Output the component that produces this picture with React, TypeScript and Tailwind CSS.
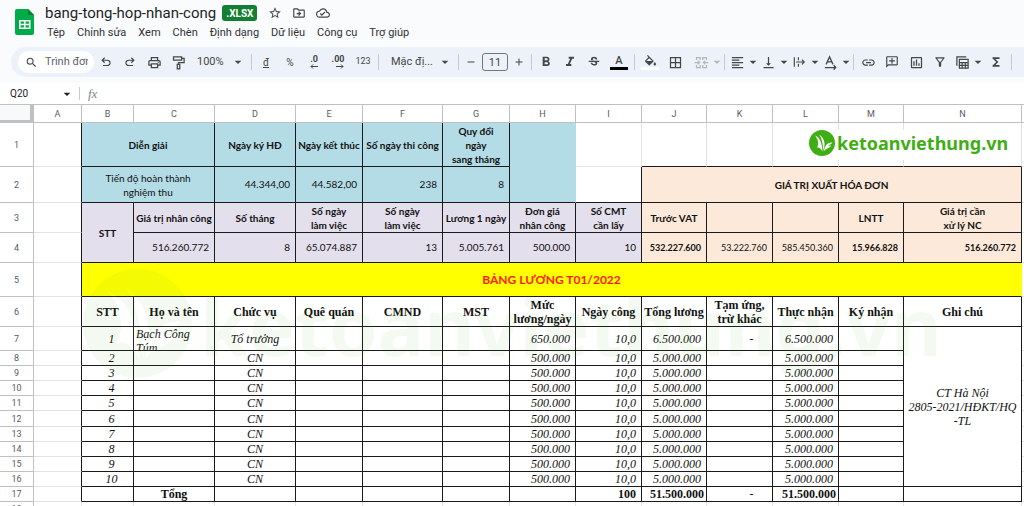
import React from 'react';
import {
  MdArrowDropDown,
  MdAdd,
  MdBorderAll,
  MdFormatAlignLeft,
  MdFormatBold,
  MdFormatItalic,
  MdFunctions,
  MdLink,
  MdOutlineAddComment,
  MdOutlineCloudDone,
  MdOutlineDriveFileMove,
  MdOutlineFilterAlt,
  MdOutlineInsertChart,
  MdOutlinePrint,
  MdRemove,
  MdSearch,
  MdStarBorder,
  MdStrikethroughS,
  MdVerticalAlignBottom,
} from 'react-icons/md';

const menus = ['Tệp', 'Chỉnh sửa', 'Xem', 'Chèn', 'Định dạng', 'Dữ liệu', 'Công cụ', 'Trợ giúp'];

const UndoIcon = () => (
  <svg viewBox="0 -960 960 960" className="size-[14px]" fill="currentColor">
    <path d="M280-200v-80h284q63 0 109.5-40T720-420q0-60-46.5-100T564-560H312l104 104-56 56-200-200 200-200 56 56-104 104h252q97 0 169.5 63T800-420q0 94-72.5 157T564-200H280Z" />
  </svg>
);

const PaintIcon = () => (
  <svg viewBox="0 0 24 24" className="size-[15px]" fill="none" stroke="currentColor" strokeWidth="2">
    <path d="M4 3h13v5H4zM17 5.500h4V12h-9v3" />
    <path d="M10 15h4v7h-4z" />
  </svg>
);

const BucketIcon = () => (
  <svg viewBox="0 0 24 18" className="h-[11px] w-[15px]" fill="currentColor">
    <path d="M16.560 8.940L7.620 0 6.210 1.410l2.380 2.380-5.150 5.150c-.59.59-.59 1.540 0 2.120l5.500 5.500c.29.29.68.44 1.060.44s.77-.15 1.060-.44l5.500-5.500c.59-.58.59-1.530 0-2.120zM5.210 10L10 5.210 14.790 10zM19 11.500s-2 2.170-2 3.500c0 1.100.9 2 2 2s2-.9 2-2c0-1.330-2-3.500-2-3.500z" />
  </svg>
);

const MergeIcon = () => (
  <svg viewBox="0 0 24 24" className="size-[15px]" fill="none" stroke="currentColor" strokeWidth="2">
    <path d="M4 8V4h6v4M14 8V4h6v4M4 16v4h6v-4M14 16v4h6v-4M1 12h8M23 12h-8M6 9l3 3-3 3M18 9l-3 3 3 3" />
  </svg>
);

const OverflowIcon = () => (
  <svg viewBox="0 0 24 24" className="size-[14px]" fill="none" stroke="currentColor" strokeWidth="2">
    <path d="M4 4v16M11 4v5M11 15v5M7 12h14M17 8l4 4-4 4" />
  </svg>
);

const RotateIcon = () => (
  <svg viewBox="0 0 24 24" className="size-[15px]" fill="none" stroke="currentColor" strokeWidth="2">
    <path d="M5 15L10.500 3 16 15M7 11h7M3 20h17M17 16.500l3.500 3.500-3.500 3.500" />
  </svg>
);

const TableViewIcon = () => (
  <svg viewBox="0 0 24 24" className="size-[15px]" fill="none" stroke="currentColor" strokeWidth="2">
    <path d="M3 17V3h15M7 7h14v14H7zM7 12h14M7 16.500h14M11.500 12v9M16.500 12v9" />
  </svg>
);

const BrandMark = ({ className }: { className: string }) => (
  <svg viewBox="0 0 100 100" className={className}>
    <circle cx="50" cy="50" r="50" fill="#3fae14" />
    <path
      d="M22 20C40 28 50 45 52 84 46 70 38 66 31 68 39 52 34 32 22 20zM40 17C54 28 63 45 59 64 57 70 56 75 55 80 54 55 50 35 40 17zM57 82C60 60 72 47 90 48 86 56 78 57 71 59 77 61 82 61 86 60 78 72 66 70 57 82z"
      fill="#fff"
    />
  </svg>
);

const Divider = () => <span className="mx-0.5 h-4 w-px shrink-0 bg-[#c7cbd1]" />;

const Tool = ({
  label,
  className = 'w-6',
  children,
}: {
  label: string;
  className?: string;
  children: React.ReactNode;
}) => (
  <button aria-label={label} className={`flex h-6 shrink-0 items-center justify-center ${className}`}>
    {children}
  </button>
);

const DropTool = ({
  label,
  className = '',
  children,
}: {
  label: string;
  className?: string;
  children: React.ReactNode;
}) => (
  <button aria-label={label} className={`flex h-6 shrink-0 items-center ${className}`}>
    <span className="flex w-5 justify-center">{children}</span>
    <span className="flex w-[11px] justify-center">
      <MdArrowDropDown className="size-4 shrink-0" />
    </span>
  </button>
);

const Decimal = ({ text, back }: { text: string; back?: boolean }) => (
  <span className="flex flex-col items-end text-[9px] leading-[9px] font-bold">
    {text}
    <svg viewBox="0 0 8 5" className="h-[5px] w-2" fill="none" stroke="currentColor">
      <path d={back ? 'M8 2.500H1M3 .5l-2 2 2 2' : 'M0 2.500h7M5 .5l2 2-2 2'} />
    </svg>
  </span>
);

function Header() {
  return (
    <header className="shrink-0 bg-[#f9fbfd] pb-1.5">
      <div className="flex h-[47px] pl-[15px]">
        <svg viewBox="0 0 19 26" className="mt-[9px] h-[26px] w-[19px] shrink-0">
          <path d="M2 0h11l6 6v18a2 2 0 0 1-2 2H2a2 2 0 0 1-2-2V2a2 2 0 0 1 2-2z" fill="#00ac47" />
          <path d="M13 0l6 6h-6z" fill="#00832d" />
          <path
            d="M4 11h11.500v9H4zM5.500 12.500v2.200h3.500v-2.200zM10.500 12.500v2.200H14v-2.200zM5.500 16.200v2.300h3.500v-2.300zM10.500 16.200v2.300H14v-2.300z"
            fill="#fff"
            fillRule="evenodd"
          />
        </svg>
        <div className="ml-[11px] pt-1">
          <div className="flex h-[18px] items-center text-[#444746]">
            <h1 className="font-[Roboto] text-[15px] leading-[18px] text-[#1f1f1f]">bang-tong-hop-nhan-cong</h1>
            <span className="ml-1.5 flex h-4 items-center rounded-[3px] bg-[#137f33] px-1 font-[Roboto] text-[10px] font-bold text-white">
              .XLSX
            </span>
            <button aria-label="Gắn dấu sao" className="ml-[11px]">
              <MdStarBorder className="size-[14px]" />
            </button>
            <button aria-label="Di chuyển" className="ml-2.5">
              <MdOutlineDriveFileMove className="size-[14px]" />
            </button>
            <button aria-label="Trạng thái tài liệu" className="ml-2.5">
              <MdOutlineCloudDone className="size-[14px]" />
            </button>
          </div>
          <nav className="mt-0.5 flex h-[18px] items-center gap-3 pl-0.5 font-[Roboto] text-[11px] text-[#303134]">
            {menus.map((menu) => (
              <button key={menu} className="whitespace-nowrap">
                {menu}
              </button>
            ))}
          </nav>
        </div>
      </div>

      <div className="ml-[11px] flex h-[30px] items-center overflow-hidden rounded-l-full bg-[#edf2fa] pl-[7px] font-[Roboto] text-[11px] text-[#444746]">
        <label className="flex h-[22px] w-[76px] shrink-0 items-center rounded-full bg-white pl-[7px]">
          <MdSearch className="size-[13px] shrink-0" />
          <input
            aria-label="Trình đơn"
            placeholder="Trình đơn"
            className="ml-[7px] w-[43px] outline-none placeholder:text-[#5f6368]"
          />
        </label>
        <Tool label="Hủy">
          <UndoIcon />
        </Tool>
        <Tool label="Làm lại">
          <span className="-scale-x-100">
            <UndoIcon />
          </span>
        </Tool>
        <Tool label="In">
          <MdOutlinePrint className="size-[15px]" />
        </Tool>
        <Tool label="Sao chép định dạng">
          <PaintIcon />
        </Tool>
        <div className="relative w-[59px] shrink-0">
          <select aria-label="Thu phóng" className="w-full appearance-none pl-[7px]">
            <option>100%</option>
          </select>
          <MdArrowDropDown className="pointer-events-none absolute top-0 right-[3px] size-4" />
        </div>
        <Divider />
        <Tool label="Tiền tệ">
          <span className="text-[10px] underline">đ</span>
        </Tool>
        <Tool label="Phần trăm">
          <span className="text-[10px]">%</span>
        </Tool>
        <Tool label="Giảm số thập phân">
          <Decimal text=".0" back />
        </Tool>
        <Tool label="Tăng số thập phân">
          <Decimal text=".00" />
        </Tool>
        <Tool label="Định dạng khác" className="w-[26px]">
          <span className="text-[9px]">123</span>
        </Tool>
        <Divider />
        <div className="relative w-[75px] shrink-0">
          <select aria-label="Phông chữ" className="w-full appearance-none pl-2.5">
            <option>Mặc đị...</option>
          </select>
          <MdArrowDropDown className="pointer-events-none absolute top-0 right-[3px] size-4" />
        </div>
        <Divider />
        <Tool label="Giảm cỡ chữ" className="w-5">
          <MdRemove className="size-3" />
        </Tool>
        <input
          aria-label="Cỡ chữ"
          defaultValue="11"
          className="mx-px h-[18px] w-[26px] shrink-0 rounded-[3px] border border-[#747775] text-center outline-none"
        />
        <Tool label="Tăng cỡ chữ" className="w-5">
          <MdAdd className="size-3" />
        </Tool>
        <Divider />
        <Tool label="In đậm">
          <MdFormatBold className="size-4" />
        </Tool>
        <Tool label="In nghiêng">
          <MdFormatItalic className="size-4" />
        </Tool>
        <Tool label="Gạch ngang">
          <MdStrikethroughS className="size-[14px]" />
        </Tool>
        <Tool label="Màu văn bản" className="w-[26px]">
          <span className="w-[18px] border-b-[3px] border-black text-[11px] leading-3 font-medium">A</span>
        </Tool>
        <Divider />
        <Tool label="Màu nền" className="w-[26px]">
          <span className="flex w-[18px] justify-center border-b-[3px] border-white pb-px">
            <BucketIcon />
          </span>
        </Tool>
        <Tool label="Đường viền">
          <MdBorderAll className="size-[15px]" />
        </Tool>
        <DropTool label="Hợp nhất ô" className="ml-1 text-[#b4b7bb]">
          <MergeIcon />
        </DropTool>
        <Divider />
        <DropTool label="Căn ngang">
          <MdFormatAlignLeft className="size-[15px]" />
        </DropTool>
        <DropTool label="Căn dọc">
          <MdVerticalAlignBottom className="size-[15px]" />
        </DropTool>
        <DropTool label="Xuống dòng">
          <OverflowIcon />
        </DropTool>
        <DropTool label="Xoay văn bản">
          <RotateIcon />
        </DropTool>
        <Divider />
        <Tool label="Chèn liên kết">
          <MdLink className="size-[15px]" />
        </Tool>
        <Tool label="Chèn nhận xét">
          <MdOutlineAddComment className="size-[14px] -scale-x-100" />
        </Tool>
        <Tool label="Chèn biểu đồ">
          <MdOutlineInsertChart className="size-[15px]" />
        </Tool>
        <Tool label="Tạo bộ lọc">
          <MdOutlineFilterAlt className="size-[14px]" />
        </Tool>
        <DropTool label="Chế độ xem bảng">
          <TableViewIcon />
        </DropTool>
        <Tool label="Hàm" className="w-[26px]">
          <MdFunctions className="size-[14px]" />
        </Tool>
        <Divider />
      </div>
    </header>
  );
}

function FormulaBar() {
  return (
    <div className="flex h-[22px] shrink-0 items-center border-b border-[#c0c0c0] bg-white font-[Roboto] text-[10px] text-[#202124]">
      <input aria-label="Hộp tên" defaultValue="Q20" className="w-[59px] pl-2.5 outline-none" />
      <button aria-label="Chọn dải ô" className="flex w-4 justify-center">
        <MdArrowDropDown className="size-4" />
      </button>
      <span className="mx-1 h-[13px] w-px bg-[#c7cbd1]" />
      <label htmlFor="formula" className="ml-1 font-['Liberation_Serif'] text-[13px] text-[#80868b] italic">
        fx
      </label>
      <input id="formula" className="ml-2 flex-1 outline-none" />
    </div>
  );
}

interface Cell {
  text?: React.ReactNode;
  cls?: string;
  cols?: number;
  rows?: number;
}

const grid = 'border-[#e2e3e3]';
const blue = "border-[#1a1a1a] bg-[#b4dce6] font-['Lato']";
const lilac = "border-[#1a1a1a] bg-[#e4dfec] font-['Lato']";
const peach = "border-[#1a1a1a] bg-[#fde9d9] font-['Lato']";
const serif = "border-[#1a1a1a] font-['Liberation_Serif'] text-[12px] leading-[14px]";
const head = 'text-center font-bold text-[10px] leading-[14px] whitespace-nowrap';
const num = 'text-right pr-[5px] text-[10px]';
const small = 'text-right pr-[5px] text-[9px]';

const columns = 'ABCDEFGHIJKLMN'.split('');

const payroll = Array.from({ length: 9 }, (_, i) => i + 2);

const titles = [
  'STT',
  'Họ và tên',
  'Chức vụ',
  'Quê quán',
  'CMND',
  'MST',
  <>Mức<br />lương/ngày</>,
  'Ngày công',
  'Tổng lương',
  <>Tạm ứng,<br />trừ khác</>,
  'Thực nhận',
  'Ký nhận',
  'Ghi chú',
];

const rows: { height: string; cells: Cell[] }[] = [
  {
    height: 'h-[44px]',
    cells: [
      { text: 'Diễn giải', cols: 2, cls: `${blue} ${head}` },
      { text: 'Ngày ký HĐ', cls: `${blue} ${head}` },
      { text: 'Ngày kết thúc', cls: `${blue} ${head}` },
      { text: 'Số ngày thi công', cls: `${blue} ${head}` },
      { text: <>Quy đổi<br />ngày<br />sang tháng</>, cls: `${blue} ${head}` },
      { rows: 2, cls: `${blue} border-r-[#b4dce6]` },
      { cls: grid },
      { cls: `${grid} border-b-[#1a1a1a]` },
      { cls: `${grid} border-b-[#1a1a1a]` },
      { text: <Brand />, cls: `${grid} border-b-[#1a1a1a]` },
      { cls: `${grid} border-b-[#1a1a1a]` },
      { cls: `${grid} border-b-[#1a1a1a]` },
    ],
  },
  {
    height: 'h-[36px]',
    cells: [
      { text: <>Tiến độ hoàn thành<br />nghiệm thu</>, cols: 2, cls: `${blue} text-center text-[10px] leading-[14px]` },
      { text: '44.344,00', cls: `${blue} ${num}` },
      { text: '44.582,00', cls: `${blue} ${num}` },
      { text: '238', cls: `${blue} ${num}` },
      { text: '8', cls: `${blue} ${num}` },
      { cls: 'border-[#1a1a1a]' },
      { text: 'GIÁ TRỊ XUẤT HÓA ĐƠN', cols: 5, cls: `${peach} ${head}` },
    ],
  },
  {
    height: 'h-[30px]',
    cells: [
      { text: 'STT', rows: 2, cls: `${lilac} ${head}` },
      { text: 'Giá trị nhân công', cls: `${lilac} ${head}` },
      { text: 'Số tháng', cls: `${lilac} ${head}` },
      { text: <>Số ngày<br />làm việc</>, cls: `${lilac} ${head}` },
      { text: <>Số ngày<br />làm việc</>, cls: `${lilac} ${head}` },
      { text: 'Lương 1 ngày', cls: `${lilac} ${head}` },
      { text: <>Đơn giá<br />nhân công</>, cls: `${lilac} ${head}` },
      { text: <>Số CMT<br />cần lấy</>, cls: `${lilac} ${head}` },
      { text: 'Trước VAT', cls: `${peach} ${head}` },
      { cls: peach },
      { cls: peach },
      { text: 'LNTT', cls: `${peach} ${head}` },
      { text: <>Giá trị cần<br />xử lý NC</>, cls: `${peach} ${head}` },
    ],
  },
  {
    height: 'h-[30px]',
    cells: [
      { text: '516.260.772', cls: `${lilac} ${num}` },
      { text: '8', cls: `${lilac} ${num}` },
      { text: '65.074.887', cls: `${lilac} ${num}` },
      { text: '13', cls: `${lilac} ${num}` },
      { text: '5.005.761', cls: `${lilac} ${num}` },
      { text: '500.000', cls: `${lilac} ${num}` },
      { text: '10', cls: `${lilac} ${num}` },
      { text: '532.227.600', cls: `${peach} ${small} font-bold` },
      { text: '53.222.760', cls: `${peach} ${small}` },
      { text: '585.450.360', cls: `${peach} ${small}` },
      { text: '15.966.828', cls: `${peach} ${small} font-bold` },
      { text: '516.260.772', cls: `${peach} ${small} font-bold` },
    ],
  },
  {
    height: 'h-[34px]',
    cells: [
      {
        text: 'BẢNG LƯƠNG T01/2022',
        cols: 13,
        cls: "border-[#1a1a1a] border-r-[#ffff00] bg-[#ffff00] text-center font-['Lato'] text-[12px] font-bold text-[#ff1a00]",
      },
    ],
  },
  {
    height: 'h-[30px]',
    cells: titles.map((text) => ({ text, cls: `${serif} text-center font-bold` })),
  },
  {
    height: 'h-[24px]',
    cells: [
      { text: '1', cls: `${serif} text-center italic pl-2` },
      { text: <div className="h-[23px] overflow-hidden pl-0.5">Bạch Công<br />Túm</div>, cls: `${serif} italic` },
      { text: 'Tổ trưởng', cls: `${serif} text-center italic` },
      { cls: serif },
      { cls: serif },
      { cls: serif },
      { text: '650.000', cls: `${serif} pr-[5px] text-right italic` },
      { text: '10,0', cls: `${serif} pr-[5px] text-right italic` },
      { text: '6.500.000', cls: `${serif} pr-[5px] text-right italic` },
      { text: '-', cls: `${serif} pl-6 text-center` },
      { text: '6.500.000', cls: `${serif} pr-[5px] text-right italic` },
      { cls: serif },
      { text: <>CT Hà Nội<br />2805-2021/HĐKT/HQ<br />-TL</>, rows: 10, cls: `${serif} text-center italic` },
    ],
  },
  ...payroll.map((no) => ({
    height: no === 6 ? 'h-[16px]' : 'h-[15px]',
    cells: [
      { text: no, cls: `${serif} text-center italic pl-2` },
      { cls: serif },
      { text: 'CN', cls: `${serif} text-center italic` },
      { cls: serif },
      { cls: serif },
      { cls: serif },
      { text: '500.000', cls: `${serif} pr-[5px] text-right italic` },
      { text: '10,0', cls: `${serif} pr-[5px] text-right italic` },
      { text: '5.000.000', cls: `${serif} pr-[5px] text-right italic` },
      { cls: serif },
      { text: '5.000.000', cls: `${serif} pr-[5px] text-right italic` },
      { cls: serif },
    ],
  })),
  {
    height: 'h-[15px]',
    cells: [
      { cls: serif },
      { text: 'Tổng', cls: `${serif} text-center font-bold` },
      { cls: serif },
      { cls: serif },
      { cls: serif },
      { cls: serif },
      { cls: serif },
      { text: '100', cls: `${serif} pr-[5px] text-right font-bold` },
      { text: '51.500.000', cls: `${serif} pr-0.5 text-right font-bold` },
      { text: '-', cls: `${serif} pl-6 text-center` },
      { text: '51.500.000', cls: `${serif} pr-0.5 text-right font-bold` },
      { cls: serif },
      { cls: serif },
    ],
  },
  { height: 'h-[15px]', cells: columns.slice(1).map(() => ({ cls: grid })) },
];

function Brand() {
  return (
    <div className="relative h-[30px]">
      <div className="absolute top-0 left-[36px] flex h-[30px] items-center bg-white">
        <BrandMark className="mb-1 size-[26px] shrink-0" />
        <span className="mb-1 ml-0.5 font-['Noto_Sans'] text-[18px] leading-[26px] font-bold text-[#3fae14]">
          ketoanviethung.vn
        </span>
      </div>
    </div>
  );
}

function Sheet() {
  return (
    <main className="relative flex-1 overflow-hidden bg-white">
      <table className="w-full table-fixed border-separate border-spacing-0 text-[#111]">
        <colgroup>
          <col className="w-[34px]" />
          <col className="w-[48px]" />
          <col className="w-[52px]" />
          <col className="w-[81px]" />
          <col className="w-[81px]" />
          <col className="w-[67px]" />
          <col className="w-[80px]" />
          <col className="w-[67px]" />
          <col className="w-[66px]" />
          <col className="w-[66px]" />
          <col className="w-[65px]" />
          <col className="w-[66px]" />
          <col className="w-[66px]" />
          <col className="w-[65px]" />
          <col className="w-[118px]" />
          <col />
        </colgroup>
        <thead>
          <tr className="h-[18px] font-[Roboto] text-[9px] leading-3 text-[#575b5f]">
            <td className="border-r-4 border-b-[3px] border-[#c0c0c0] bg-[#f8f9fa] p-0" />
            {columns.map((name) => (
              <th key={name} scope="col" className="border-r border-b border-[#c0c0c0] p-0 font-normal">
                {name}
              </th>
            ))}
            <td className="border-b border-[#c0c0c0] p-0" />
          </tr>
        </thead>
        <tbody>
          {rows.map((row, i) => (
            <tr key={i} className={row.height}>
              <th
                scope="row"
                className="border-r border-b border-[#c0c0c0] p-0 font-[Roboto] text-[9px] leading-3 font-normal text-[#575b5f]"
              >
                {i + 1}
              </th>
              <td className={`border-r border-b p-0 ${grid} ${i < 17 ? 'border-r-[#1a1a1a]' : ''}`} />
              {row.cells.map((cell, j) => (
                <td
                  key={j}
                  colSpan={cell.cols}
                  rowSpan={cell.rows}
                  className={`border-r border-b py-0 pl-0 ${cell.cls}`}
                >
                  {cell.text}
                </td>
              ))}
              <td className={`border-b p-0 ${grid}`} />
            </tr>
          ))}
        </tbody>
      </table>

      <div className="pointer-events-none absolute top-[164px] left-[83px] flex items-center opacity-5">
        <BrandMark className="size-[109px] shrink-0" />
        <span className="ml-2 pt-1 font-['Noto_Sans'] text-[78px] leading-[100px] font-bold text-[#3fae14]">
          ketoanviethung.vn
        </span>
      </div>
    </main>
  );
}

export default function App() {
  return (
    <div className="flex h-screen flex-col overflow-hidden bg-white">
      <Header />
      <FormulaBar />
      <Sheet />
    </div>
  );
}
